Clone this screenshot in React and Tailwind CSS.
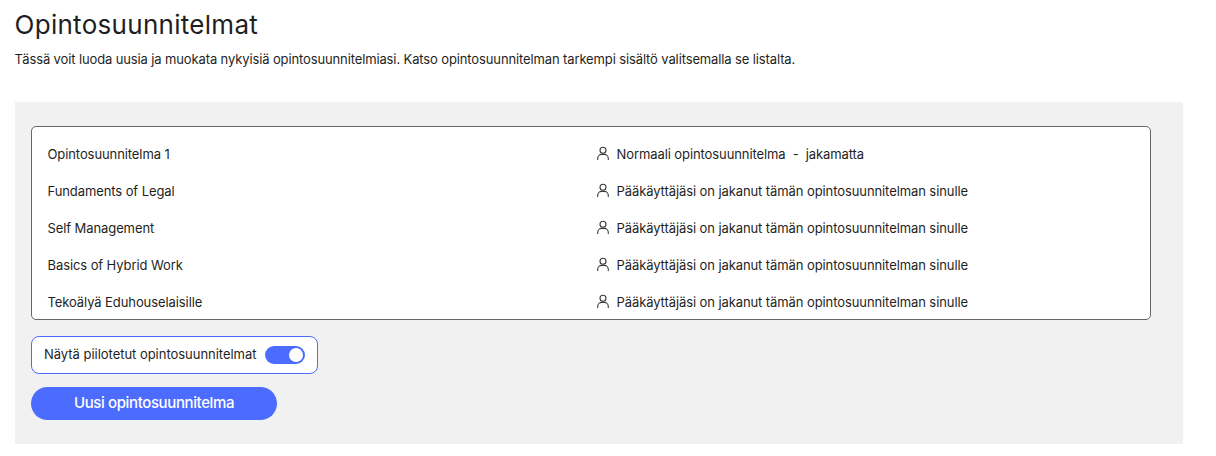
import React from 'react';

const rows = [
  ['Opintosuunnitelma 1', 'Normaali opintosuunnitelma  -  jakamatta'],
  ['Fundaments of Legal', 'Pääkäyttäjäsi on jakanut tämän opintosuunnitelman sinulle'],
  ['Self Management', 'Pääkäyttäjäsi on jakanut tämän opintosuunnitelman sinulle'],
  ['Basics of Hybrid Work', 'Pääkäyttäjäsi on jakanut tämän opintosuunnitelman sinulle'],
  ['Tekoälyä Eduhouselaisille', 'Pääkäyttäjäsi on jakanut tämän opintosuunnitelman sinulle'],
];

const UserIcon = () => (
  <svg width="14" height="15" viewBox="0 0 14 15" fill="none" stroke="#3a3a3a" strokeWidth="1.1" className="shrink-0 -mt-[2px]">
    <circle cx="7" cy="4.2" r="3" />
    <path d="M1.7 14v-1.6c0-2.3 1.8-4 4-4h2.6c2.2 0 4 1.7 4 4V14" />
  </svg>
);

const App = () => {
  return (
    <div className="w-[1216px] h-[456px] bg-white overflow-hidden text-[#1f1f23] font-['Inter',sans-serif]">
      <div className="pl-[15px] pr-[33px]">
        <h1 className="pt-[9px] -ml-[0.5px] text-[26px] leading-[32px] font-normal tracking-[0.29px]">Opintosuunnitelmat</h1>
        <p className="mt-[10px] -ml-[0.5px] text-[13px] leading-[16px] tracking-[-0.124px] whitespace-pre">
          Tässä voit luoda uusia ja muokata nykyisiä opintosuunnitelmiasi. Katso opintosuunnitelman tarkempi sisältö valitsemalla se listalta.
        </p>

        <div className="mt-[35px] h-[342px] bg-[#f1f1f1] pt-[24px] px-4">
          <div className="w-[1120px] h-[194px] bg-white border border-[#666666] rounded-[5px] overflow-hidden">
            {rows.map(([name, status]) => (
              <div key={name} className="h-[37px] pl-[15.5px] flex items-center text-[13px] tracking-[-0.09px] relative top-[9px]">
                <div className="w-[548px]">{name}</div>
                <div className="flex items-center gap-[7px]">
                  <UserIcon />
                  <span className="whitespace-pre">{status}</span>
                </div>
              </div>
            ))}
          </div>

          <div className="mt-4 w-[287px] h-[38px] bg-white border border-[#4c6cff] rounded-[8px] pl-3 pr-3 flex items-center justify-between text-[13px] tracking-[-0.03px]">
            <span className="whitespace-pre">Näytä piilotetut opintosuunnitelmat</span>
            <span className="w-10 h-[18px] rounded-full bg-[#4c6cff] flex items-center justify-end pr-[2px]">
              <span className="w-[14px] h-[14px] rounded-full bg-white"></span>
            </span>
          </div>

          <button className="mt-[13px] w-[246px] h-[33px] rounded-full bg-[#4c6cff] text-white text-[15px] font-medium tracking-[-0.38px] flex items-center justify-center">
            Uusi opintosuunnitelma
          </button>
        </div>
      </div>
    </div>
  );
};

export default App;
